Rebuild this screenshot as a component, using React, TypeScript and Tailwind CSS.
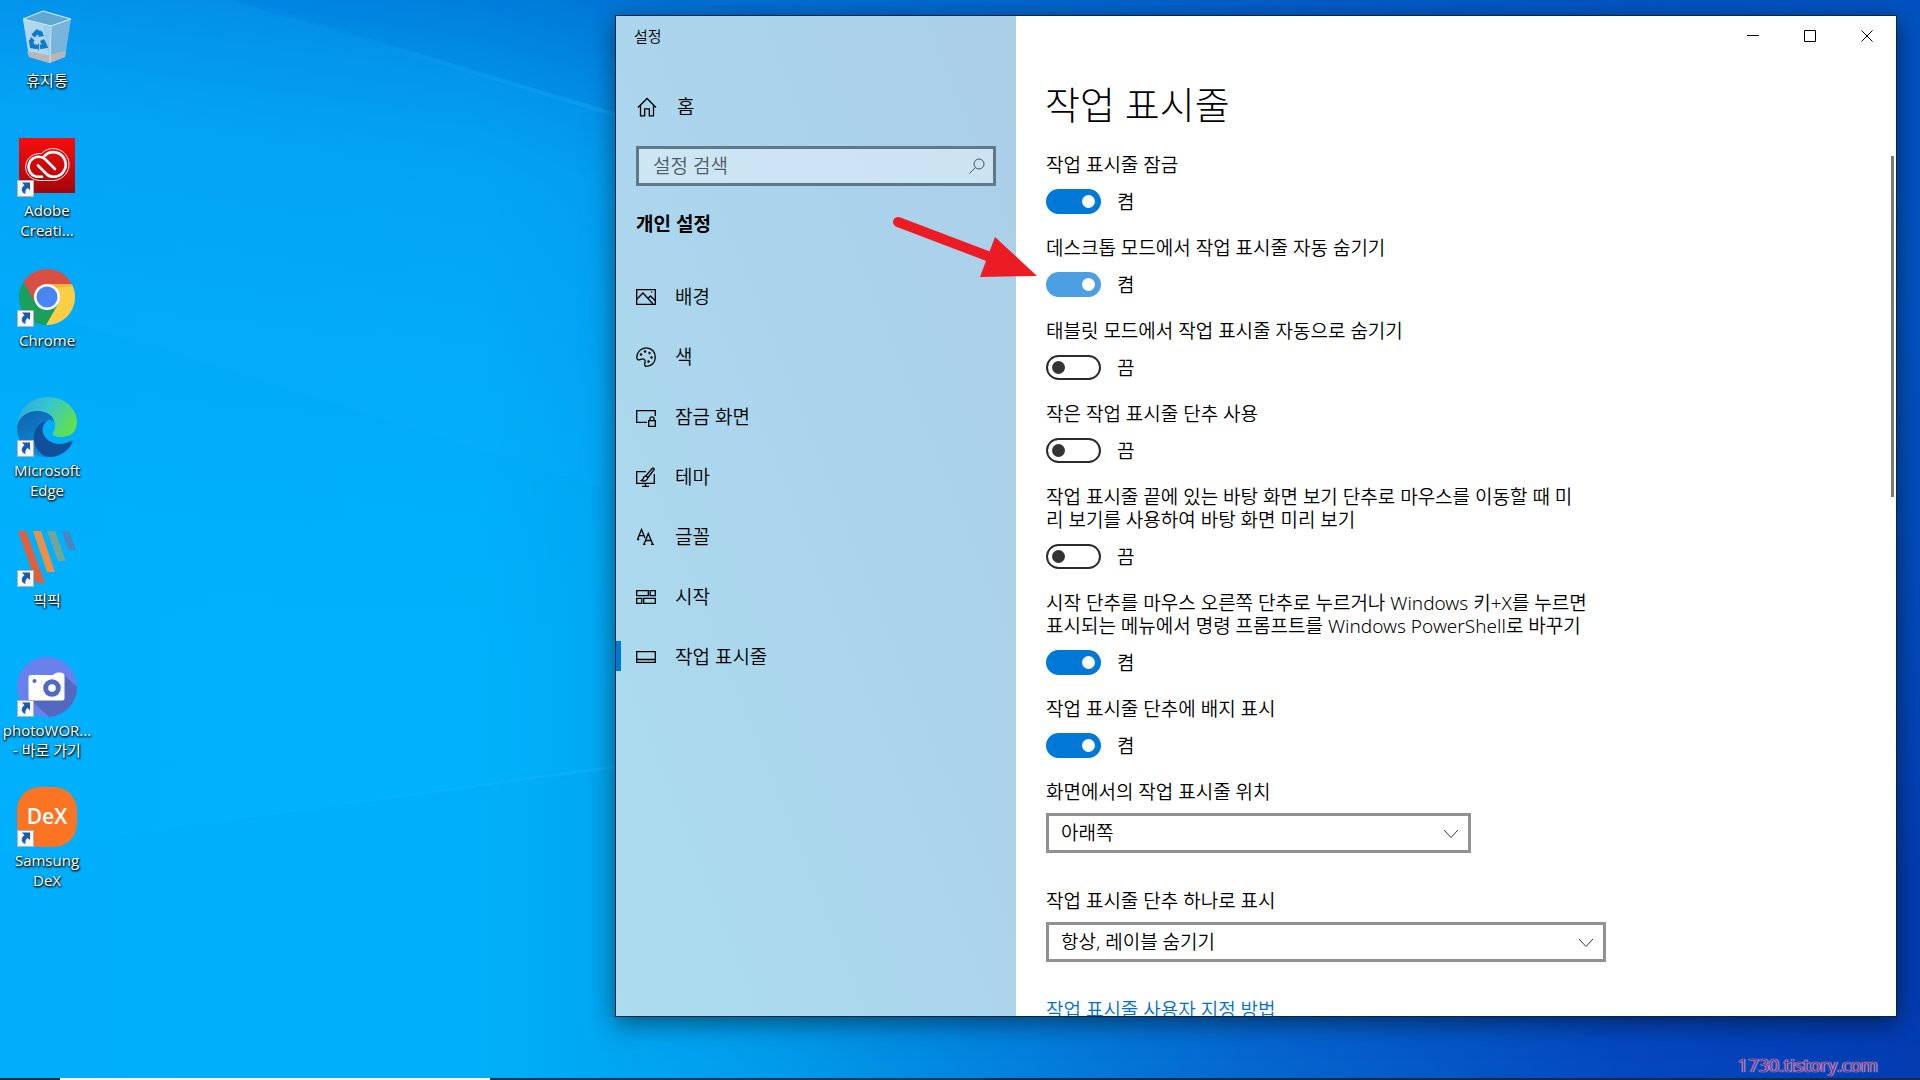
import type { ReactNode } from "react";

type Shortcut = {
	id: string;
	lines: string[];
	icon: ReactNode;
	linked?: boolean;
};

type Setting = {
	id: string;
	lines: string[];
	on: boolean;
	hovered?: boolean;
};

const shortcuts: Shortcut[] = [
	{ id: "bin", lines: ["휴지통"], icon: <RecycleBinIcon /> },
	{ id: "adobe", lines: ["Adobe", "Creati..."], icon: <AdobeIcon />, linked: true },
	{ id: "chrome", lines: ["Chrome"], icon: <ChromeIcon />, linked: true },
	{ id: "edge", lines: ["Microsoft", "Edge"], icon: <EdgeIcon />, linked: true },
	{ id: "picpick", lines: ["픽픽"], icon: <PicPickIcon />, linked: true },
	{ id: "photo", lines: ["photoWOR...", "- 바로 가기"], icon: <PhotoIcon />, linked: true },
	{ id: "dex", lines: ["Samsung", "DeX"], icon: <DexIcon />, linked: true },
];

const settings: Setting[] = [
	{ id: "lock", lines: ["작업 표시줄 잠금"], on: true },
	{
		id: "hide-desktop",
		lines: ["데스크톱 모드에서 작업 표시줄 자동 숨기기"],
		on: true,
		hovered: true,
	},
	{
		id: "hide-tablet",
		lines: ["태블릿 모드에서 작업 표시줄 자동으로 숨기기"],
		on: false,
	},
	{ id: "small", lines: ["작은 작업 표시줄 단추 사용"], on: false },
	{
		id: "peek",
		lines: [
			"작업 표시줄 끝에 있는 바탕 화면 보기 단추로 마우스를 이동할 때 미",
			"리 보기를 사용하여 바탕 화면 미리 보기",
		],
		on: false,
	},
	{
		id: "powershell",
		lines: [
			"시작 단추를 마우스 오른쪽 단추로 누르거나 Windows 키+X를 누르면",
			"표시되는 메뉴에서 명령 프롬프트를 Windows PowerShell로 바꾸기",
		],
		on: true,
	},
	{ id: "badge", lines: ["작업 표시줄 단추에 배지 표시"], on: true },
];

const navItems = [
	{
		label: "배경",
		icon: (
			<>
				<path d="M.7 2.700h18.600v14.600H.7z" />
				<path d="M1 12l6-6 10 11M12 11.500l2.500-2.500 5 5" />
				<path d="M15 5.200h1.200" />
			</>
		),
	},
	{
		label: "색",
		icon: (
			<>
				<path d="M.8 10.500C.8 5 5 .8 10.300 .8S19.300 5 19.300 10.200 15.500 19.300 10.500 19.300c-1.800 0-2.200-1.300-1.700-2.800.6-1.800.4-3.800-1.300-4.500-1.500-.6-2.500.5-3.800.8-1.700.3-2.900-.5-2.900-2.300z" />
				<g fill="currentColor" stroke="none">
					<circle cx="5" cy="7.500" r="1.200" />
					<circle cx="9" cy="4.500" r="1.200" />
					<circle cx="13.500" cy="6" r="1.200" />
					<circle cx="15.500" cy="10.500" r="1.200" />
					<circle cx="12.500" cy="14.500" r="1.200" />
				</g>
			</>
		),
	},
	{
		label: "잠금 화면",
		icon: (
			<>
				<path d="M11 15.300H.7V3.700h18.600V9" />
				<path d="M12.700 13.700h6.600v5.600h-6.600zM14 13.500v-1.700a2 2 0 0 1 4 0v1.700" />
			</>
		),
	},
	{
		label: "테마",
		icon: (
			<>
				<path d="M10 4.700H.7v11.600h17.600V7M9.500 16.500v2.800M6 19.300h7" />
				<path d="M17.500 1.200c.8.5.8 1.200.3 1.800L12 10.500 9.800 8.800l6.400-7.300c.4-.4.9-.6 1.300-.3zM9.600 9c-2.200.2-2.100 2-2.600 3-.3.800-1 1.200-1.800 1.500 2.500 1 5.800.6 6.600-2.700" />
			</>
		),
	},
	{
		label: "글꼴",
		icon: (
			<>
				<path d="M1.500 12.500L5.500 2.500 9 11M3 8.700h4.700M1.200 12.500h2" />
				<path d="M8 17.300L12.300 6.500l4.400 10.800M9.500 13.500h5.500M7 17.300h2.500M15 17.300h3" />
			</>
		),
	},
	{
		label: "시작",
		icon: (
			<path d="M.7 3.700h11.600v5H.7zM14.200 3.700h5.100v5h-5.100zM.7 11.300h5.100v5H.7zM7.700 11.300h11.600v5H7.700z" />
		),
	},
	{
		label: "작업 표시줄",
		icon: <path d="M.7 4.700h18.600v10.600H.7zM.7 12.500h18.600" />,
		active: true,
	},
];

function LineIcon({ children }: { children: ReactNode }) {
	return (
		<svg
			viewBox="0 0 20 20"
			className="size-5 shrink-0"
			fill="none"
			stroke="currentColor"
			strokeWidth="1.3"
			aria-hidden="true"
		>
			{children}
		</svg>
	);
}

function RecycleBinIcon() {
	return (
		<svg viewBox="0 0 60 60" className="size-15" aria-hidden="true">
			<path d="M6 12L26 19 33 56 12 49z" fill="#a9d3ea" opacity=".9" />
			<path d="M54 12L33 19 33 56 48 50z" fill="#7fb6d8" opacity=".95" />
			<path d="M6 12L33 19 33 56 12 49z" fill="#b4d8ec" opacity=".85" />
			<path d="M6 12L26 4 54 12 34 19z" fill="#5fa9d2" />
			<path d="M10 44L31 48 49 44 48 50 32 56 12 50z" fill="#b9b6b8" />
			<path d="M6 12L26 4 54 12 34 19z" fill="none" stroke="#dff0f8" strokeWidth="1" />
			<path d="M34 19L33 56" stroke="#d4e8f2" strokeWidth="1" />
			<g fill="none" stroke="#0f78cf" strokeWidth="4.500">
				<path d="M16 29l4-4 5 2" />
				<path d="M14 33l1 6 5 1" />
				<path d="M23 40l5-1-3-6" />
			</g>
			<path d="M24 23l3 6-6 1zM12 35l2-5 4 4zM22 36v8l-3-4z" fill="#0f78cf" />
		</svg>
	);
}

function AdobeIcon() {
	return (
		<svg viewBox="0 0 60 60" className="size-15" aria-hidden="true">
			<defs>
				<linearGradient id="adobe-bg" x1="0" y1="0" x2="0" y2="1">
					<stop offset="0" stopColor="#f90d0d" />
					<stop offset="1" stopColor="#a3060a" />
				</linearGradient>
			</defs>
			<path d="M2 1h56v55H2z" fill="url(#adobe-bg)" />
			<g fill="none" stroke="#fff" strokeLinecap="round">
				<path
					d="M22 43.500a13.500 13.500 0 0 1 0-27h2.500A16 16 0 1 1 36.500 43.500z"
					strokeWidth=".9"
				/>
				<path d="M25 39.800h-3a10 10 0 1 1 6.500-17.300L33 27l5 5" strokeWidth="2.600" />
				<path
					d="M21 28.500l8.500 8.500c2.500 2.500 4.500 2.800 7 2.800a12.300 12.300 0 1 0-9-20.800"
					strokeWidth="2.600"
				/>
			</g>
		</svg>
	);
}

function ChromeIcon() {
	return (
		<svg viewBox="0 0 60 60" className="size-15" aria-hidden="true">
			<path d="M6.300 15A28 28 0 0 1 54.800 17H30L18.700 36.500z" fill="#d94f43" />
			<path d="M54.800 17A28 28 0 0 1 28.900 58L41.300 36.500 30 17z" fill="#fdce45" />
			<path d="M28.900 58A28 28 0 0 1 6.300 15L18.700 36.500h22.600z" fill="#1a9f5c" />
			<path d="M30 17h24.800l.8 2L36 21z" fill="#c98a1c" opacity=".35" />
			<circle cx="30" cy="30" r="13" fill="#fff" />
			<circle cx="30" cy="30" r="10.500" fill="#4a86f3" />
		</svg>
	);
}

function EdgeIcon() {
	return (
		<svg viewBox="0 0 60 60" className="size-15" aria-hidden="true">
			<defs>
				<linearGradient id="edge-top" x1="0" y1=".2" x2="1" y2=".6">
					<stop offset="0" stopColor="#2fa8e0" />
					<stop offset=".45" stopColor="#35c7cf" />
					<stop offset="1" stopColor="#63e04a" />
				</linearGradient>
				<linearGradient id="edge-left" x1="0" y1="0" x2=".4" y2="1">
					<stop offset="0" stopColor="#0d62ab" />
					<stop offset="1" stopColor="#1389d8" />
				</linearGradient>
			</defs>
			<path
				d="M0 30C1 18 11 13 21 13c9 0 16 6 17 12-8-5-18 0-20 10-2 11 5 22 16 25C15 62 0 48 0 30z"
				fill="url(#edge-left)"
			/>
			<path
				d="M17 43c-1-10 5-19 14-20-6 4-7 11-3 17 6 8 17 9 26 4 1-.5 2 .5 1.300 2C50 56 40 60.500 31 60c-8-2-13-9-14-17z"
				fill="#10509b"
			/>
			<path
				d="M0 29C1 12 14 0 31 0c17 0 29 12 29 25 0 10-7 15-15 15-7 0-11-2-9-5 2-2 2-5 2-8-1-8-8-13-17-13C10 14 2 20 0 29z"
				fill="url(#edge-top)"
			/>
		</svg>
	);
}

function PicPickIcon() {
	return (
		<svg viewBox="0 0 60 60" className="size-15" aria-hidden="true">
			<path d="M1 4h8l19 52h-9z" fill="#df603f" />
			<path d="M16 4h8l14 41h-8z" fill="#ec9048" />
			<path d="M30 4h8l11 30h-8z" fill="#73a697" />
			<path d="M45 4h7l7 19h-8z" fill="#4c85bd" />
		</svg>
	);
}

function PhotoIcon() {
	return (
		<svg viewBox="0 0 60 60" className="size-15" aria-hidden="true">
			<circle cx="30" cy="30" r="30" fill="#6a80ec" />
			<path d="M47 18L60 30A30 30 0 0 1 32 60L14 43z" fill="#5468c0" />
			<path
				d="M14 18h22c1.500-2 4-2.500 7-2.500s4 1 4.500 3V41a2.500 2.500 0 0 1-2.500 2.500H14A2.500 2.500 0 0 1 11.500 41V20.500A2.500 2.500 0 0 1 14 18z"
				fill="#fff"
			/>
			<circle cx="17.500" cy="24" r="2" fill="#5468c0" />
			<circle cx="35" cy="31" r="8.800" fill="#5468c0" />
			<circle cx="35" cy="31" r="3.800" fill="#fff" />
		</svg>
	);
}

function DexIcon() {
	return (
		<span className="flex size-15 items-center justify-center rounded-[23px] bg-[#fa7424] pb-0.5 text-[21px] leading-none font-semibold text-white">
			DeX
		</span>
	);
}

function ShortcutBadge() {
	return (
		<svg
			viewBox="0 0 17 17"
			className="absolute bottom-0 left-0 size-[17px]"
			aria-hidden="true"
		>
			<path d="M.5.5h16v16H.5z" fill="#f5f7f9" stroke="#b9b3b0" />
			<path
				d="M5 2.500h8v7.500L10.500 8C8.500 9.500 8 11.500 8.500 14 4 12.500 3.500 8 7.500 5.200z"
				fill="#1d5aa8"
			/>
		</svg>
	);
}

function Wallpaper() {
	return (
		<svg
			viewBox="0 0 1920 1080"
			preserveAspectRatio="none"
			className="absolute inset-0 size-full"
			aria-hidden="true"
		>
			<defs>
				<linearGradient id="wall-base" x1="0" y1="0" x2="1" y2="0">
					<stop offset="0" stopColor="#00b0fd" />
					<stop offset=".25" stopColor="#00b2fb" />
					<stop offset=".4" stopColor="#009ceb" />
					<stop offset=".65" stopColor="#0567d0" />
					<stop offset=".85" stopColor="#0447bf" />
					<stop offset="1" stopColor="#043cb2" />
				</linearGradient>
				<linearGradient id="wall-top" x1=".36" y1="0" x2=".2" y2=".6">
					<stop offset="0" stopColor="#005cc8" stopOpacity=".7" />
					<stop offset=".3" stopColor="#007cde" stopOpacity=".3" />
					<stop offset="1" stopColor="#00a0f0" stopOpacity="0" />
				</linearGradient>
				<linearGradient id="wall-ray" x1="0" y1="0" x2="1" y2="0">
					<stop offset="0" stopColor="#30b8ff" stopOpacity="0" />
					<stop offset="1" stopColor="#30b8ff" stopOpacity=".3" />
				</linearGradient>
			</defs>
			<path d="M0 0h1920v1080H0z" fill="url(#wall-base)" />
			<path d="M0 0h1920v1080H0z" fill="url(#wall-top)" />
			<path d="M230 0L640 124v-4L242 0z" fill="url(#wall-ray)" />
			<path d="M230 0L640 122V500L0 300V0z" fill="#10b0ff" opacity=".2" />
			<path d="M100 838L640 762v3z" fill="url(#wall-ray)" />
			<path d="M0 852L640 764V1080H0z" fill="#0090e0" opacity=".05" />
		</svg>
	);
}

function DesktopShortcut({ item }: { item: Shortcut }) {
	return (
		<button
			type="button"
			className="flex h-26 w-full flex-col items-center gap-[3px] text-[15px] leading-5 text-white [text-shadow:1px_1px_2px_#000,0_1px_2px_#000]"
		>
			<span className="relative block size-15 [text-shadow:none]">
				{item.icon}
				{item.linked && <ShortcutBadge />}
			</span>
			<span className="whitespace-nowrap">
				{item.lines.map((line) => (
					<span key={line} className="block">
						{line}
					</span>
				))}
			</span>
		</button>
	);
}

function Toggle({ item }: { item: Setting }) {
	const track = item.on
		? item.hovered
			? "justify-end bg-[#4c9fe2] px-[6px]"
			: "justify-end bg-[#0078d7] px-[6px]"
		: "justify-start border-2 border-[#2b2b2b] bg-white px-1";
	return (
		<div className="mb-[23px]">
			<label htmlFor={item.id} className="block">
				{item.lines.map((line) => (
					<span key={line} className="block">
						{line}
					</span>
				))}
			</label>
			<div className="mt-3 flex h-[25px] items-center gap-4">
				<button
					id={item.id}
					type="button"
					role="switch"
					aria-checked={item.on}
					className={`flex h-[25px] w-[55px] items-center rounded-full ${track}`}
				>
					<span
						className={`size-[13px] rounded-full ${item.on ? "bg-white" : "bg-[#333333]"}`}
					/>
				</button>
				<span className="pt-px">{item.on ? "켬" : "끔"}</span>
			</div>
		</div>
	);
}

function Dropdown({
	id,
	label,
	value,
	className,
}: {
	id: string;
	label: string;
	value: string;
	className: string;
}) {
	return (
		<div>
			<label htmlFor={id} className="block">
				{label}
			</label>
			<div className={`relative mt-[9px] ${className}`}>
				<select
					id={id}
					defaultValue={value}
					className="h-10 w-full appearance-none border-3 border-[#919191] bg-white pl-3 text-black"
				>
					<option>{value}</option>
				</select>
				<svg
					viewBox="0 0 16 10"
					className="pointer-events-none absolute top-4 right-3 h-[10px] w-4"
					fill="none"
					stroke="#333"
					aria-hidden="true"
				>
					<path d="M1 1l7 7.500L15 1" />
				</svg>
			</div>
		</div>
	);
}

function Sidebar() {
	return (
		<aside className="flex w-[400px] shrink-0 flex-col bg-linear-to-tr from-[#acdcee] via-[#abd5ed] to-[#abcee9]">
			<div className="flex h-10 items-center px-[18px] text-[15px]">설정</div>
			<a href="#home" className="mt-[21px] flex h-15 items-center gap-5 px-[21px]">
				<LineIcon>
					<path d="M1 10.500L10 1.500l9 9M3.500 8.500v10.300h4.200v-7h4.600v7h4.200V8.500" />
				</LineIcon>
				홈
			</a>
			<div className="relative mx-5 mt-[9px]">
				<input
					type="text"
					aria-label="설정 검색"
					placeholder="설정 검색"
					className="h-10 w-full border-3 border-[#5f7888] bg-white/40 px-[14px] placeholder:text-[#4d5c66]"
				/>
				<svg
					viewBox="0 0 16 16"
					className="absolute top-3 right-[11px] size-4"
					fill="none"
					stroke="#445561"
					aria-hidden="true"
				>
					<circle cx="10" cy="6" r="5" />
					<path d="M6.500 9.500L.5 15.500" />
				</svg>
			</div>
			<h2 className="mt-[25px] px-5 leading-[26px] font-bold">개인 설정</h2>
			<nav className="mt-[30px] flex flex-col">
				{navItems.map((item) => (
					<a
						key={item.label}
						href={`#${item.label}`}
						className="relative flex h-15 items-center gap-[19px] px-5"
					>
						{item.active && (
							<span className="absolute top-[14px] left-0 h-[30px] w-[5px] bg-[#0078d7]" />
						)}
						<LineIcon>{item.icon}</LineIcon>
						{item.label}
					</a>
				))}
			</nav>
		</aside>
	);
}

function CaptionButtons() {
	const buttons = [
		{ label: "최소화", d: "M0 5.500h12" },
		{ label: "최대화", d: "M.5.5h11v11H.5z" },
		{ label: "닫기", d: "M.5.5l11 11M11.500.5l-11 11" },
	];
	return (
		<div className="flex h-10 shrink-0 justify-end pr-px">
			{buttons.map((button) => (
				<button
					key={button.label}
					type="button"
					aria-label={button.label}
					className="flex w-[57px] items-center justify-center"
				>
					<svg viewBox="0 0 12 12" className="size-3" fill="none" stroke="#000">
						<path d={button.d} />
					</svg>
				</button>
			))}
		</div>
	);
}

function SettingsWindow() {
	return (
		<section className="absolute top-[15px] right-[23px] bottom-[63px] left-[615px] flex border border-[#0c2440] font-['Noto_Sans','Noto_Sans_CJK_KR',sans-serif] text-[19px] leading-[23px] font-[350] text-black shadow-[0_6px_24px_rgba(0,0,0,0.5)]">
			<Sidebar />
			<main className="relative flex min-w-0 flex-1 flex-col overflow-hidden bg-white">
				<CaptionButtons />
				<div className="min-h-0 flex-1 overflow-hidden pt-6 pl-[29px]">
					<h1 className="mb-[26px] text-[38px] leading-12 font-light">작업 표시줄</h1>
					<div className="pl-px">
						{settings.map((item) => (
							<Toggle key={item.id} item={item} />
						))}
						<div className="flex flex-col gap-[37px]">
							<Dropdown
								id="position"
								label="화면에서의 작업 표시줄 위치"
								value="아래쪽"
								className="max-w-[425px]"
							/>
							<Dropdown
								id="combine"
								label="작업 표시줄 단추 하나로 표시"
								value="항상, 레이블 숨기기"
								className="max-w-[560px]"
							/>
							<a href="#customize" className="text-[#0070d2]">
								작업 표시줄 사용자 지정 방법
							</a>
						</div>
					</div>
				</div>
				<div className="absolute top-[140px] right-[2px] h-[341px] w-[3px] bg-[#7a7a7a]" />
			</main>
			<svg
				viewBox="0 0 150 70"
				className="pointer-events-none absolute top-[199px] left-[274px] h-[70px] w-[150px]"
				aria-hidden="true"
			>
				<path d="M8 7L100 42" stroke="#ed1c24" strokeWidth="10" strokeLinecap="round" />
				<path d="M105 22L147 61 90 62z" fill="#ed1c24" />
			</svg>
		</section>
	);
}

export default function App() {
	return (
		<div className="relative h-screen overflow-hidden bg-[#00a8f8] font-['Open_Sans','Noto_Sans_CJK_KR',sans-serif]">
			<Wallpaper />
			<div className="relative flex w-[94px] flex-col gap-[26px] pt-[7px]">
				{shortcuts.map((item) => (
					<DesktopShortcut key={item.id} item={item} />
				))}
			</div>
			<SettingsWindow />
			<p className="absolute right-[42px] bottom-[3px] text-[18px] leading-6 text-[#8c2a74] [text-shadow:0_0_1px_#b9b4e6,1px_0_1px_#a9a6e0,-1px_0_1px_#a9a6e0]">
				1730.tistory.com
			</p>
			<footer className="absolute inset-x-0 bottom-0 flex h-[2px] bg-[#1b2b3f]">
				<div className="w-15 bg-[#1f3038]" />
				<div className="w-[430px] bg-white" />
				<div className="w-[494px] bg-[#1d3a4a]" />
			</footer>
		</div>
	);
}
